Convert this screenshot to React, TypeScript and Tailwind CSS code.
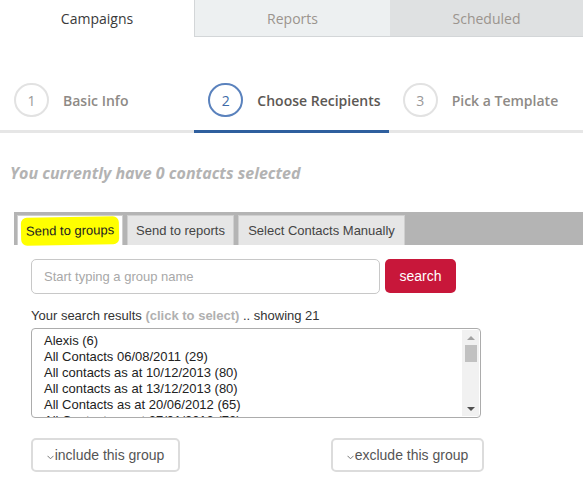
import React from "react";

const items = [
  "Alexis (6)",
  "All Contacts 06/08/2011 (29)",
  "All contacts as at 10/12/2013 (80)",
  "All contacts as at 13/12/2013 (80)",
  "All Contacts as at 20/06/2012 (65)",
  "All Contacts as at 27/01/2012 (72)",
];

function Step({ n, label, active }: { n: number; label: string; active?: boolean }) {
  return (
    <div className={"flex flex-1 items-start pl-[14px] pt-[46px] h-full border-b-[3px] " + (active ? "border-[#2f5f9e]" : "border-[#e6e6e6]")}>
      <div className="flex items-center">
        <div
          className={
            "w-[35px] h-[34px] rounded-full border-2 flex items-center justify-center text-[14px] " +
            (active ? "border-[#5a82bd] text-[#3e6aa8]" : "border-[#e2e2e2] text-[#999]")
          }
        >
          {n}
        </div>
        <span className={"ml-[14px] text-[14px] " + (active ? "text-[#5c5854] font-semibold" : "text-[#8e8a86] font-semibold")}>{label}</span>
      </div>
    </div>
  );
}

function Chev() {
  return (
    <svg width="7" height="5" viewBox="0 0 7 5" className="mr-[1px] mt-[4px]">
      <path d="M0.5 0.8 L3.5 3.8 L6.5 0.8" fill="none" stroke="#777" strokeWidth="1" />
    </svg>
  );
}

export default function App() {
  return (
    <div className="w-[583px] h-[486px] bg-white overflow-hidden" style={{ fontFamily: "'Open Sans', sans-serif" }}>
      {/* top tabs */}
      <div className="flex h-[37px]">
        <div className="w-[194px] flex items-center justify-center text-[14px] text-[#3a3a3a]">Campaigns</div>
        <div className="w-[196px] flex items-center justify-center text-[14px] text-[#9b948e] bg-[#edf0f1] border-l border-b border-[#d3d6d8]">Reports</div>
        <div className="flex-1 flex items-center justify-center text-[14px] text-[#9b948e] bg-[#dfe1e2] border-b border-[#d3d6d8]">Scheduled</div>
      </div>

      {/* steps */}
      <div className="flex h-[96px]">
        <Step n={1} label="Basic Info" />
        <Step n={2} label="Choose Recipients" active />
        <Step n={3} label="Pick a Template" />
      </div>

      <div className="pl-[10px] mt-[30px] text-[16px] italic font-bold text-[#b3b3b3] leading-[20px]">
        You currently have 0 contacts selected
      </div>

      {/* sub tabs */}
      <div className="ml-[14px] mt-[29px]" style={{ fontFamily: "'Liberation Sans', Arial, sans-serif" }}>
        <div className="flex items-end h-[33px] bg-[#b4b4b4] pl-[3px] gap-[4px]">
          <div className="h-[30px] w-[106px] bg-white flex items-center justify-center border-t border-l border-r border-[#cfcfcf]">
            <span className="bg-[#ffff00] rounded-[6px] px-[5px] py-[4px] text-[13px] text-[#222] -rotate-[1deg]">Send to groups</span>
          </div>
          <div className="h-[30px] w-[107px] bg-[#e6e6e6] flex items-center justify-center text-[13px] text-[#444] border-t border-l border-r border-[#cfcfcf]">
            Send to reports
          </div>
          <div className="h-[30px] w-[167px] bg-[#e6e6e6] flex items-center justify-center text-[13px] text-[#444] border-t border-l border-r border-[#cfcfcf]">
            Select Contacts Manually
          </div>
        </div>

        <div className="pl-[17px] pt-[14px]">
          <div className="flex gap-[5px]">
            <div className="w-[349px] h-[35px] border border-[#c8c8c8] rounded-[5px] flex items-center pl-[12px] text-[13px] text-[#a8a8a8]">
              Start typing a group name
            </div>
            <div className="w-[71px] h-[34px] bg-[#c8173a] rounded-[5px] flex items-center justify-center text-white text-[14px]">search</div>
          </div>

          <div className="mt-[14px] text-[13px] text-[#333] leading-[16px]">
            Your search results <span className="font-bold text-[#b0b0b0]">(click to select)</span> .. showing 21
          </div>

          <div className="mt-[4px] w-[450px] h-[90px] border border-[#acacac] rounded-[4px] flex overflow-hidden">
            <div className="flex-1 pl-[12px] pt-[4px] overflow-hidden text-[13px] text-[#222] leading-[16px]">
              {items.map((t) => (
                <div key={t} className="whitespace-nowrap">{t}</div>
              ))}
            </div>
            <div className="w-[17px] bg-[#f1f1f1] flex flex-col items-center my-[1px] mr-[1px]">
              <div className="h-[15px] flex items-center justify-center">
                <div className="w-0 h-0 border-l-[4px] border-r-[4px] border-b-[4px] border-l-transparent border-r-transparent border-b-[#a3a3a3]" />
              </div>
              <div className="w-[12px] h-[17px] bg-[#c1c1c1]" />
              <div className="flex-1" />
              <div className="h-[15px] flex items-center justify-center">
                <div className="w-0 h-0 border-l-[4px] border-r-[4px] border-t-[4px] border-l-transparent border-r-transparent border-t-[#505050]" />
              </div>
            </div>
          </div>

          <div className="mt-[20px] flex w-[453px] justify-between">
            <div className="h-[34px] w-[149px] border-2 border-[#dcdcdc] rounded-[5px] flex items-center justify-center text-[14px] text-[#555]">
              <Chev />include this group
            </div>
            <div className="h-[34px] w-[153px] border-2 border-[#dcdcdc] rounded-[5px] flex items-center justify-center text-[14px] text-[#555]">
              <Chev />exclude this group
            </div>
          </div>
        </div>
      </div>
    </div>
  );
}
